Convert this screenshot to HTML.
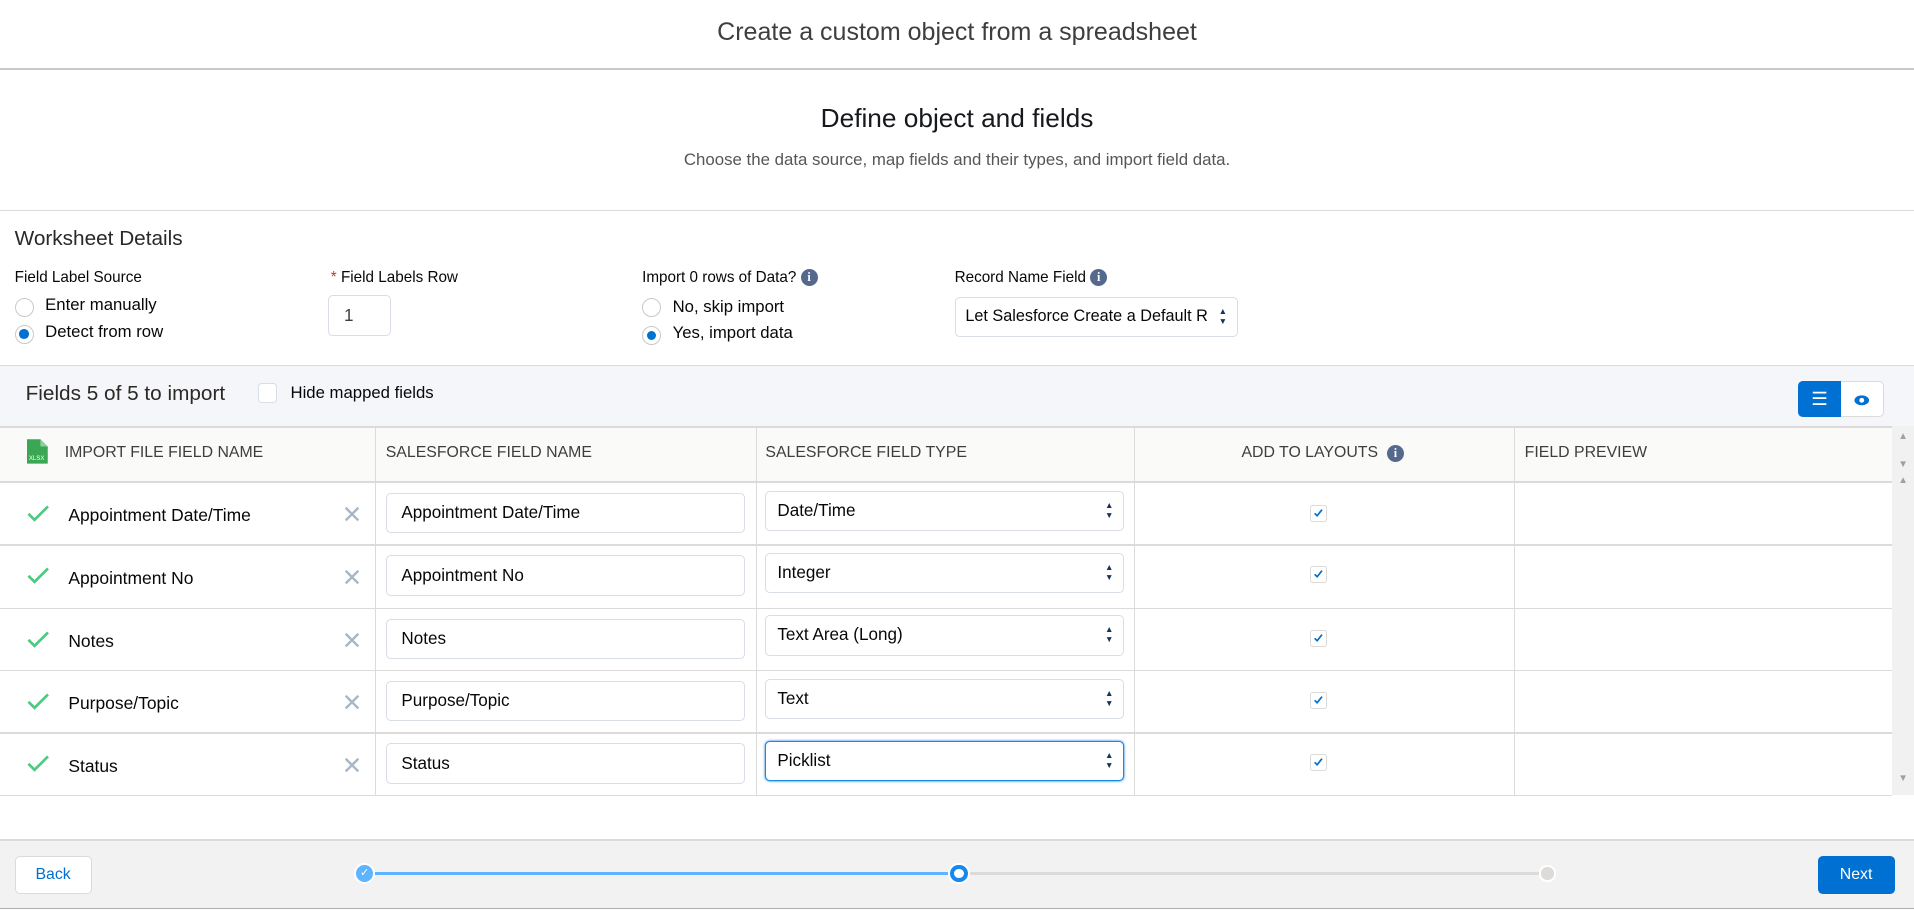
<!DOCTYPE html>
<html><head><meta charset="utf-8"><style>
html,body{margin:0;padding:0;background:#fff;overflow:hidden}
#w{zoom:1.2207;width:1568px;height:745px;position:relative;font-family:"Liberation Sans",sans-serif;color:#080707;font-size:13px}
.a{position:absolute}
.radio{position:absolute;width:14px;height:14px;border:1px solid #c9c9c9;border-radius:50%;background:#fff}
.radio.on::after{content:"";position:absolute;left:3px;top:3px;width:8px;height:8px;border-radius:50%;background:#0070d2}
.inp{position:absolute;border:1px solid #d8dde6;border-radius:4px;background:#fff;box-sizing:border-box;padding-left:12px;display:flex;align-items:center;font-size:14px}
.arr{position:absolute;right:8px;top:50%;transform:translateY(-50%);font-size:7px;line-height:8px;color:#16325c}
.info{display:inline-block;width:14px;height:14px;border-radius:50%;background:#54698d;color:#fff;font-size:10px;font-weight:bold;text-align:center;line-height:14px;font-family:"Liberation Serif",serif;vertical-align:middle}
.hl{position:absolute;left:0;height:1px;background:#dddbda}
.vl{position:absolute;width:1px;background:#dddbda}
.th{position:absolute;top:364px;font-size:13px;color:#3e3e3c}
.cb{position:absolute;width:14px;height:14px;border:1px solid #dddbda;border-radius:2px;background:#fff;box-sizing:border-box}
.lb{font-size:12.5px}
.rt{font-size:13.7px}
.ct{font-size:14.3px;top:18px}
</style></head><body><div id="w">
<div class="a" style="top:15px;width:100%;text-align:center;font-size:20.5px;color:#3e3e3c;font-weight:300">Create a custom object from a spreadsheet</div>
<div class="hl" style="top:56px;width:1568px;background:#c9c9c9"></div>
<div class="a" style="top:84px;width:100%;text-align:center;font-size:21.5px;color:#16181b">Define object and fields</div>
<div class="a" style="top:123px;width:100%;text-align:center;font-size:13.8px;color:#54575a">Choose the data source, map fields and their types, and import field data.</div>
<div class="hl" style="top:172px;width:1568px"></div>
<div class="a" style="left:12px;top:186px;font-size:17px;color:#2b2826">Worksheet Details</div>
<div class="a lb" style="left:12px;top:220px">Field Label Source</div>
<div class="radio" style="left:12px;top:244px"></div><div class="a rt" style="left:37px;top:242px">Enter manually</div>
<div class="radio on" style="left:12px;top:266px"></div><div class="a rt" style="left:37px;top:264px">Detect from row</div>
<div class="a lb" style="left:271px;top:220px"><span style="color:#c23934">*</span> Field Labels Row</div>
<div class="inp" style="left:269px;top:242px;width:51px;height:33px;color:#3e3e3c">1</div>
<div class="a lb" style="left:526px;top:220px">Import 0 rows of Data? <span class="info">i</span></div>
<div class="radio" style="left:526px;top:244px"></div><div class="a rt" style="left:551px;top:243px">No, skip import</div>
<div class="radio on" style="left:526px;top:267px"></div><div class="a rt" style="left:551px;top:265px">Yes, import data</div>
<div class="a lb" style="left:782px;top:220px">Record Name Field <span class="info">i</span></div>
<div class="inp" style="left:782px;top:243px;width:232px;height:33px;padding-left:8px;font-size:13.3px">Let Salesforce Create a Default R<div class="arr">▲<br>▼</div></div>
<div class="a" style="left:0;top:299px;width:1568px;height:50px;background:#f4f6f9;border-top:1px solid #dddbda"></div>
<div class="a" style="left:21px;top:313px;font-size:17px;color:#2b2826">Fields 5 of 5 to import</div>
<div class="cb" style="left:211px;top:314px;width:16px;height:16px;border-color:#d8dde6;border-radius:3px"></div>
<div class="a rt" style="left:238px;top:314px">Hide mapped fields</div>
<div class="a" style="left:1473px;top:312px;width:35px;height:30px;background:#0070d2;border-radius:4px 0 0 4px;color:#fff;text-align:center;line-height:30px;font-size:15px">☰</div>
<div class="a" style="left:1508px;top:312px;width:35px;height:30px;background:#fff;border:1px solid #dddbda;border-left:none;box-sizing:border-box;border-radius:0 4px 4px 0"><svg width="35" height="30"><ellipse cx="17" cy="15" rx="6" ry="4" fill="#0070d2"/><circle cx="17" cy="15" r="2" fill="#fff"/></svg></div>
<div class="a" style="left:0;top:349px;width:1550px;height:47px;background:#fafaf9;border-top:2px solid #dddbda;border-bottom:2px solid #dddbda;box-sizing:border-box"></div>
<div class="a" style="left:1550px;top:349px;width:18px;height:302px;background:#f1f1f1;font-size:8px;color:#a0a0a0;text-align:center"><div style="margin-top:4px">▲</div><div style="margin-top:14px">▼</div><div style="margin-top:4px">▲</div><div style="position:absolute;top:284px;width:18px">▼</div></div>
<svg class="a" style="left:22px;top:359px" width="17" height="21"><path d="M0 1h11l6 6v14H0z" fill="#3ba755"/><path d="M11 1v6h6" fill="#8fd19e"/><text x="1.5" y="18" font-size="5" fill="#fff" font-family="Liberation Sans">XLSX</text></svg>
<div class="th" style="left:53px">IMPORT FILE FIELD NAME</div>
<div class="th" style="left:316px">SALESFORCE FIELD NAME</div>
<div class="th" style="left:627px">SALESFORCE FIELD TYPE</div>
<div class="th" style="left:1017px">ADD TO LAYOUTS &nbsp;<span class="info">i</span></div>
<div class="th" style="left:1249px">FIELD PREVIEW</div>
<div class="vl" style="left:307px;top:349px;height:302px"></div>
<div class="vl" style="left:619px;top:349px;height:302px"></div>
<div class="vl" style="left:929px;top:349px;height:302px"></div>
<div class="vl" style="left:1240px;top:349px;height:302px"></div>
<div class="hl" style="top:446px;width:1550px"></div>
<div class="hl" style="top:498px;width:1550px"></div>
<div class="hl" style="top:549px;width:1550px"></div>
<div class="hl" style="top:600px;width:1550px"></div>
<div class="hl" style="top:651px;width:1550px"></div>

<div class="a" style="top:396px;left:0;width:1550px;height:50px">
<svg class="a" style="left:21px;top:17px" width="20" height="16"><path d="M2 8l5 5L18 2" stroke="#4bca81" stroke-width="2.2" fill="none"/></svg>
<div class="a ct" style="left:56px">Appointment Date/Time</div>
<div class="a" style="left:280px;top:14px;color:#a8b7c7;font-size:20px">✕</div>
<div class="inp" style="left:316px;top:8px;width:294px;height:33px">Appointment Date/Time</div>
<div class="inp" style="left:627px;top:6px;width:294px;height:33px;padding-left:9px">Date/Time<div class="arr">▲<br>▼</div></div>
<div class="cb" style="left:1073px;top:18px"><svg width="12" height="12"><path d="M3 6l2 2 4-5" stroke="#0070d2" stroke-width="1.4" fill="none"/></svg></div>
</div>
<div class="a" style="top:447px;left:0;width:1550px;height:50px">
<svg class="a" style="left:21px;top:17px" width="20" height="16"><path d="M2 8l5 5L18 2" stroke="#4bca81" stroke-width="2.2" fill="none"/></svg>
<div class="a ct" style="left:56px">Appointment No</div>
<div class="a" style="left:280px;top:14px;color:#a8b7c7;font-size:20px">✕</div>
<div class="inp" style="left:316px;top:8px;width:294px;height:33px">Appointment No</div>
<div class="inp" style="left:627px;top:6px;width:294px;height:33px;padding-left:9px">Integer<div class="arr">▲<br>▼</div></div>
<div class="cb" style="left:1073px;top:17px"><svg width="12" height="12"><path d="M3 6l2 2 4-5" stroke="#0070d2" stroke-width="1.4" fill="none"/></svg></div>
</div>
<div class="a" style="top:499px;left:0;width:1550px;height:50px">
<svg class="a" style="left:21px;top:17px" width="20" height="16"><path d="M2 8l5 5L18 2" stroke="#4bca81" stroke-width="2.2" fill="none"/></svg>
<div class="a ct" style="left:56px">Notes</div>
<div class="a" style="left:280px;top:14px;color:#a8b7c7;font-size:20px">✕</div>
<div class="inp" style="left:316px;top:8px;width:294px;height:33px">Notes</div>
<div class="inp" style="left:627px;top:5px;width:294px;height:33px;padding-left:9px">Text Area (Long)<div class="arr">▲<br>▼</div></div>
<div class="cb" style="left:1073px;top:17px"><svg width="12" height="12"><path d="M3 6l2 2 4-5" stroke="#0070d2" stroke-width="1.4" fill="none"/></svg></div>
</div>
<div class="a" style="top:550px;left:0;width:1550px;height:50px">
<svg class="a" style="left:21px;top:17px" width="20" height="16"><path d="M2 8l5 5L18 2" stroke="#4bca81" stroke-width="2.2" fill="none"/></svg>
<div class="a ct" style="left:56px">Purpose/Topic</div>
<div class="a" style="left:280px;top:14px;color:#a8b7c7;font-size:20px">✕</div>
<div class="inp" style="left:316px;top:8px;width:294px;height:33px">Purpose/Topic</div>
<div class="inp" style="left:627px;top:6px;width:294px;height:33px;padding-left:9px">Text<div class="arr">▲<br>▼</div></div>
<div class="cb" style="left:1073px;top:17px"><svg width="12" height="12"><path d="M3 6l2 2 4-5" stroke="#0070d2" stroke-width="1.4" fill="none"/></svg></div>
</div>
<div class="a" style="top:601px;left:0;width:1550px;height:50px">
<svg class="a" style="left:21px;top:17px" width="20" height="16"><path d="M2 8l5 5L18 2" stroke="#4bca81" stroke-width="2.2" fill="none"/></svg>
<div class="a ct" style="left:56px">Status</div>
<div class="a" style="left:280px;top:14px;color:#a8b7c7;font-size:20px">✕</div>
<div class="inp" style="left:316px;top:8px;width:294px;height:33px">Status</div>
<div class="inp" style="left:627px;top:6px;width:294px;height:33px;padding-left:9px;border-color:#1589ee;box-shadow:0 0 2px #0070d2">Picklist<div class="arr">▲<br>▼</div></div>
<div class="cb" style="left:1073px;top:17px"><svg width="12" height="12"><path d="M3 6l2 2 4-5" stroke="#0070d2" stroke-width="1.4" fill="none"/></svg></div>
</div>

<div class="a" style="left:0;top:687px;width:1568px;height:58px;background:#f3f2f2;border-top:2px solid #dddbda;border-bottom:1px solid #b0adab;box-sizing:border-box"></div>
<div class="a" style="left:12px;top:701px;width:63px;height:31px;background:#fff;border:1px solid #dddbda;border-radius:4px;box-sizing:border-box;text-align:center;line-height:29px;color:#0070d2">Back</div>
<div class="a" style="left:1489px;top:701px;width:63px;height:31px;background:#0070d2;border-radius:4px;text-align:center;line-height:31px;color:#fff">Next</div>
<div class="a" style="left:300px;top:714px;width:486px;height:3px;background:#5eb4ff"></div>
<div class="a" style="left:786px;top:714px;width:482px;height:3px;background:#dddbda"></div>
<div class="a" style="left:290px;top:707px;width:14px;height:14px;border:2px solid #fff;border-radius:50%;background:#5eb4ff;color:#fff;font-size:9px;text-align:center;line-height:14px">✓</div>
<div class="a" style="left:777px;top:707px;width:14px;height:14px;border:2px solid #fff;border-radius:50%;background:#1589ee"><div style="margin:3px;width:8px;height:8px;border-radius:50%;background:#fff;box-sizing:border-box;border:2px solid #fff"></div></div>
<div class="a" style="left:1261px;top:709px;width:10px;height:10px;border:2px solid #fff;border-radius:50%;background:#dddbda"></div>
</div></body></html>
